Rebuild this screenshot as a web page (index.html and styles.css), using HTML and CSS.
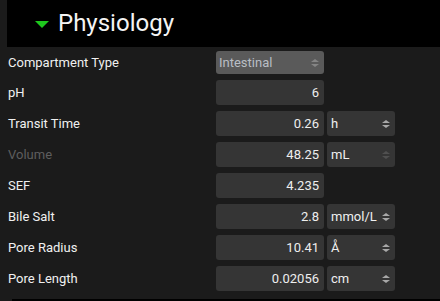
FILE: index.html
```html
<!DOCTYPE html>
<html>
<head>
<meta charset="utf-8">
<link rel="stylesheet" href="styles.css">
</head>
<body>
<div class="panel">
  <div class="header">
    <span class="caret"></span>
    <span class="title">Physiology</span>
  </div>
  <div class="rows">
    <div class="row first">
      <span class="label">Compartment Type</span>
      <div class="field select disabled-look"><span>Intestinal</span><span class="spin"></span></div>
    </div>
    <div class="row">
      <span class="label">pH</span>
      <div class="field num">6</div>
    </div>
    <div class="row">
      <span class="label">Transit Time</span>
      <div class="field num">0.26</div>
      <div class="unit"><span>h</span><span class="spin"></span></div>
    </div>
    <div class="row">
      <span class="label muted">Volume</span>
      <div class="field num">48.25</div>
      <div class="unit dim"><span>mL</span><span class="spin"></span></div>
    </div>
    <div class="row">
      <span class="label">SEF</span>
      <div class="field num">4.235</div>
    </div>
    <div class="row">
      <span class="label">Bile Salt</span>
      <div class="field num">2.8</div>
      <div class="unit"><span>mmol/L</span><span class="spin"></span></div>
    </div>
    <div class="row">
      <span class="label">Pore Radius</span>
      <div class="field num">10.41</div>
      <div class="unit"><span>Å</span><span class="spin"></span></div>
    </div>
    <div class="row">
      <span class="label">Pore Length</span>
      <div class="field num">0.02056</div>
      <div class="unit"><span>cm</span><span class="spin"></span></div>
    </div>
  </div>
  <div class="next"></div>
</div>
</body>
</html>
```

FILE: styles.css
```css
html, body {
  margin: 0;
  padding: 0;
  background: #1b1b1b;
  width: 440px;
  height: 301px;
  overflow: hidden;
  font-family: Roboto, "Liberation Sans", sans-serif;
  color: #ececec;
}
.panel {
  display: flex;
  flex-direction: column;
}
.header {
  margin-left: 7px;
  height: 47px;
  background: #000;
  display: flex;
  align-items: center;
  box-sizing: border-box;
  padding-left: 28px;
}
.caret {
  width: 0;
  height: 0;
  border-left: 7px solid transparent;
  border-right: 7px solid transparent;
  border-top: 7px solid #1ec81e;
  margin-right: 9px;
  margin-top: 1px;
}
.title {
  font-size: 24px;
  color: #f4f4f4;
  line-height: 1;
  margin-top: -2px;
}
.rows {
  display: flex;
  flex-direction: column;
  gap: 6px;
  padding-top: 4px;
}
.row {
  display: flex;
  align-items: center;
  height: 25px;
}
.row.first {
  height: 23px;
}
.label {
  width: 216px;
  padding-left: 8px;
  box-sizing: border-box;
  font-size: 13px;
  color: #f0f0f0;
}
.label.muted {
  color: #5e5e5e;
}
.field {
  width: 108px;
  height: 25px;
  box-sizing: border-box;
  background: #353535;
  border-radius: 3px;
  font-size: 13px;
  display: flex;
  align-items: center;
}
.field.num {
  justify-content: flex-end;
  padding-right: 5px;
  color: #eeeeee;
}
.field.select {
  height: 23px;
  background: #5a5a5a;
  color: #b9bec4;
  justify-content: space-between;
  padding-left: 3px;
  padding-right: 5px;
}
.unit {
  margin-left: 3px;
  width: 68px;
  height: 25px;
  box-sizing: border-box;
  background: #353535;
  border-radius: 3px;
  font-size: 13px;
  color: #f0f0f0;
  display: flex;
  align-items: center;
  justify-content: space-between;
  padding-left: 4px;
  padding-right: 5px;
}
.spin {
  display: flex;
  flex-direction: column;
  gap: 2px;
  align-items: center;
}
.spin::before, .spin::after {
  content: "";
  width: 0;
  height: 0;
  border-left: 4px solid transparent;
  border-right: 4px solid transparent;
}
.spin::before {
  border-bottom: 3px solid #a8a8a8;
}
.spin::after {
  border-top: 3px solid #a8a8a8;
}
.unit.dim .spin::before { border-bottom-color: #505050; }
.unit.dim .spin::after { border-top-color: #505050; }
.select .spin::before { border-bottom-color: #858585; }
.select .spin::after { border-top-color: #858585; }
.next {
  margin-top: 8px;
  margin-left: 12px;
  height: 10px;
  background: #000;
}
```
